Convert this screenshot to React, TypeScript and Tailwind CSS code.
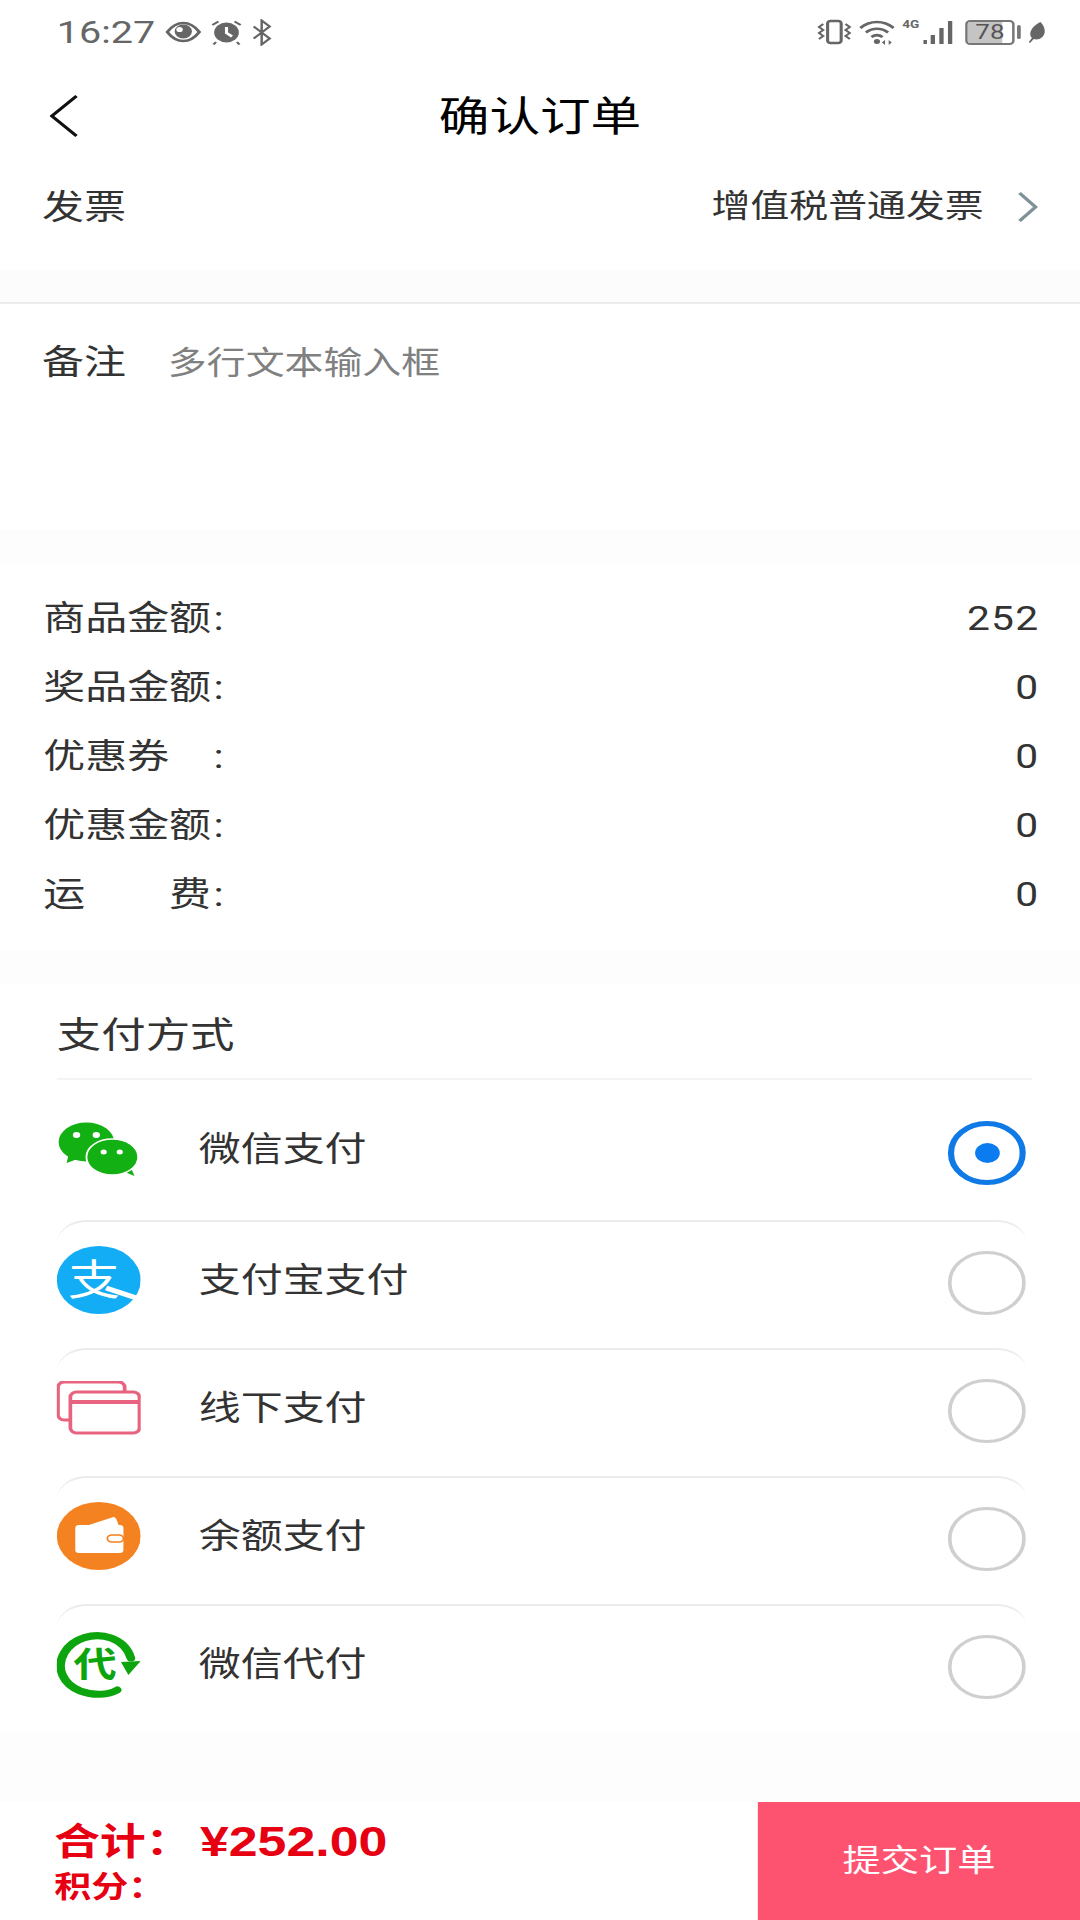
const priceRows = [
  { label: "商品金额", colon: ":", value: "252" },
  { label: "奖品金额", colon: ":", value: "0" },
  { label: "优惠券", colon: ":", value: "0" },
  { label: "优惠金额", colon: ":", value: "0" },
  { label: "运费", colon: ":", value: "0" },
];

function EyeIcon() {
  return (
    <svg width="29" height="24" viewBox="0 0 29 24" fill="none">
      <path d="M1.5 12C6 5 10 3 14.5 3S23 5 27.5 12C23 19 19 21 14.5 21S6 19 1.5 12Z" stroke="#666" strokeWidth="2.5" />
      <circle cx="14.5" cy="11.5" r="7" fill="#666" />
      <circle cx="11.5" cy="9.5" r="2.6" fill="#fff" />
    </svg>
  );
}

function AlarmIcon() {
  return (
    <svg width="25" height="26" viewBox="0 0 25 26" fill="none">
      <circle cx="12.5" cy="13.5" r="10" fill="#666" />
      <path d="M12.5 8v6l4.500 3.500" stroke="#fff" strokeWidth="2.500" />
      <path d="M1 6l5-3.500M24 6l-5-3.500M4 23l-2 2.500M21 23l2 2.500" stroke="#666" strokeWidth="2" />
    </svg>
  );
}

function BluetoothIcon() {
  return (
    <svg width="17" height="27" viewBox="0 0 17 27" fill="none">
      <path d="M1.500 7.500l13 12-6.500 6V1.500l6.500 6-13 12" stroke="#666" strokeWidth="2" />
    </svg>
  );
}

function VibrateIcon() {
  return (
    <svg width="28" height="26" viewBox="0 0 28 26" fill="none">
      <rect x="8.500" y="2" width="11" height="22" rx="2.500" stroke="#666" strokeWidth="2.500" />
      <path d="M5 5L1.500 8 5 11 1.500 14 5 17 1.500 20M23 5l3.500 3L23 11l3.500 3L23 17l3.500 3" stroke="#666" strokeWidth="1.800" />
    </svg>
  );
}

function WifiIcon() {
  return (
    <svg width="29" height="26" viewBox="0 0 29 26" fill="none">
      <path d="M1 9C9 1 20 1 28 9M5.500 13.500C11 8.500 18 8.500 23.500 13.500M10 18c3-2.500 6-2.500 9 0" stroke="#666" strokeWidth="2.500" />
      <circle cx="14.500" cy="22.500" r="2.500" fill="#666" />
      <path d="M21 21l-2.500 2.500 2.500 2.500zM24 21l2.500 2.500-2.500 2.500z" fill="#666" />
    </svg>
  );
}

function SignalIcon() {
  return (
    <svg width="25" height="25" viewBox="0 0 25 25" fill="#666">
      <rect x="0" y="20" width="3" height="4" />
      <rect x="6" y="15" width="3.500" height="9" />
      <rect x="13" y="8" width="3.500" height="16" />
      <rect x="20" y="1" width="3.500" height="23" />
    </svg>
  );
}

function LeafIcon() {
  return (
    <svg width="15" height="23" viewBox="0 0 15 23" fill="#666">
      <path d="M11 1c4 5 4.500 11 1.500 15-2 2.500-5 3-7 2l-3 4-1-1 2.500-4C1 13 3 6 11 1Z" />
    </svg>
  );
}

function WechatIcon() {
  return (
    <svg width="66" height="54" viewBox="0 0 66 54">
      <path d="M9 30L7 41l13-6z" fill="#13b013" />
      <ellipse cx="23" cy="20" rx="22.500" ry="19.500" fill="#13b013" />
      <circle cx="15" cy="13" r="3" fill="#fff" />
      <circle cx="31" cy="13" r="3" fill="#fff" />
      <path d="M50 48l12 6-4-11z" fill="#13b013" />
      <ellipse cx="44" cy="35" rx="21" ry="18" fill="#13b013" stroke="#fff" strokeWidth="1.500" />
      <circle cx="37" cy="30" r="2.500" fill="#fff" />
      <circle cx="50" cy="30" r="2.500" fill="#fff" />
    </svg>
  );
}

function AlipayIcon() {
  return (
    <svg width="68" height="68" viewBox="0 0 68 68">
      <circle cx="34" cy="34" r="34" fill="#12adf4" />
      <text x="30" y="49" textAnchor="middle" fontSize="42" fill="#fff" fontFamily="'Noto Sans CJK SC', sans-serif">支</text>
      <path d="M40 42l27 11" stroke="#fff" strokeWidth="5" />
    </svg>
  );
}

function CardsIcon() {
  return (
    <svg width="68" height="54" viewBox="0 0 68 54" fill="none" stroke="#e8637f" strokeWidth="3">
      <path d="M10 39H6a5 5 0 0 1-5-5V6a5 5 0 0 1 5-5h44a5 5 0 0 1 5 5v4" />
      <rect x="11" y="11" width="56" height="41" rx="5" />
      <path d="M11 21h56" strokeWidth="4" />
    </svg>
  );
}

function WalletIcon() {
  return (
    <svg width="68" height="68" viewBox="0 0 68 68">
      <circle cx="34" cy="34" r="34" fill="#f58220" />
      <path d="M26 23l20-8c2 0 3 4 4 8z" fill="#fff" />
      <rect x="15" y="23" width="39" height="28" rx="3" fill="#fff" />
      <rect x="41" y="33" width="13" height="7" rx="3.500" fill="#fff" stroke="#f58220" strokeWidth="1.500" />
    </svg>
  );
}

function ProxyPayIcon() {
  return (
    <svg width="68" height="68" viewBox="0 0 68 68" fill="none">
      <path d="M49 60C42 65 30 66 19 61 5 54-1 38 6 23 13 8 30 2 44 8c9 4 14 12 16 20" stroke="#0da50d" strokeWidth="7" strokeLinecap="round" />
      <path d="M52 32l16-1-10 14z" fill="#0da50d" />
      <text x="31" y="47" textAnchor="middle" fontSize="35" fontWeight="700" fill="#0da50d" fontFamily="'Noto Sans CJK SC', sans-serif">代</text>
    </svg>
  );
}

const payments = [
  { name: "微信支付", icon: <WechatIcon />, checked: true, rowClass: "h-[140px] pb-[2px]" },
  { name: "支付宝支付", icon: <AlipayIcon />, checked: false, rowClass: "h-[128px] pb-[10px] rounded-t-[24px] border-t-2 border-[#ececec]" },
  { name: "线下支付", icon: <CardsIcon />, checked: false, rowClass: "h-[128px] pb-[10px] rounded-t-[24px] border-t-2 border-[#ececec]" },
  { name: "余额支付", icon: <WalletIcon />, checked: false, rowClass: "h-[128px] pb-[10px] rounded-t-[24px] border-t-2 border-[#ececec]" },
  { name: "微信代付", icon: <ProxyPayIcon />, checked: false, rowClass: "h-[128px] pb-[10px] rounded-t-[24px] border-t-2 border-[#ececec]" },
];

function Radio({ checked }: { checked: boolean }) {
  if (checked) {
    return (
      <div className="mt-[8px] flex h-[64px] w-[63px] items-center justify-center rounded-full border-[5px] border-[#0f7ae5] bg-white">
        <div className="h-[20px] w-[20px] rounded-full bg-[#0a7cf0]" />
      </div>
    );
  }
  return <div className="mt-[6px] h-[64px] w-[63px] rounded-full border-[3px] border-[#cfcfcf] bg-white" />;
}

export default function App() {
  return (
    <div className="h-[1920px] w-[875px] origin-top-left scale-x-[1.2343] overflow-hidden bg-white font-['Roboto','Noto_Sans_CJK_SC',sans-serif] text-[#333]">
      {/* Status bar */}
      <div className="flex h-[70px] items-center justify-between pb-[6px] pl-[46px] pr-[28px]">
        <div className="flex items-center">
          <span className="text-[32px] leading-none text-[#666]">16:27</span>
          <div className="ml-[8px]"><EyeIcon /></div>
          <div className="ml-[8px]"><AlarmIcon /></div>
          <div className="ml-[8px]"><BluetoothIcon /></div>
        </div>
        <div className="flex items-center">
          <VibrateIcon />
          <div className="ml-[6px]"><WifiIcon /></div>
          <div className="relative ml-[6px] h-[26px] w-[42px]">
            <span className="absolute left-0 top-[-2px] text-[11px] font-bold text-[#666]">4G</span>
            <div className="absolute bottom-0 right-0"><SignalIcon /></div>
          </div>
          <div className="relative ml-[9px] flex h-[25px] w-[40px] items-center justify-center overflow-hidden rounded-[4px] border-2 border-[#777]">
            <div className="absolute inset-y-0 left-0 w-[78%] bg-[#c4c4c4]" />
            <span className="relative text-[21px] leading-none text-[#555]">78</span>
          </div>
          <div className="ml-[2px] h-[14px] w-[3px] rounded-sm bg-[#777]" />
          <div className="ml-[5px]"><LeafIcon /></div>
        </div>
      </div>

      {/* Title */}
      <div className="relative flex h-[90px] items-center justify-center pt-[4px]">
        <svg className="absolute left-[40px] top-[24px]" width="24" height="44" viewBox="0 0 24 44" fill="none">
          <path d="M22 2L2 22l20 20" stroke="#111" strokeWidth="2.800" />
        </svg>
        <span className="text-[41px] leading-none text-black">确认订单</span>
      </div>

      {/* Invoice */}
      <div className="flex h-[90px] items-center justify-between pl-[34px] pr-[34px] pt-[4px]">
        <span className="text-[34px]">发票</span>
        <div className="flex items-center">
          <span className="text-[31.5px]">增值税普通发票</span>
          <svg className="ml-[27px]" width="17" height="32" viewBox="0 0 17 32" fill="none">
            <path d="M2 2l13 14L2 30" stroke="#7f9198" strokeWidth="3" />
          </svg>
        </div>
      </div>
      <div className="h-[20px]" />
      <div className="h-[34px] border-b-2 border-[#ececec] bg-[#fcfcfc]" />

      {/* Remark */}
      <div className="flex h-[226px] items-start pl-[34px] pt-[34px]">
        <span className="text-[34px] leading-[48px]">备注</span>
        <span className="ml-[34px] mt-[2px] text-[31.5px] leading-[48px] text-[#808080]">多行文本输入框</span>
      </div>
      <div className="h-[35px] bg-[#fdfdfd]" />

      {/* Amounts */}
      <div className="flex h-[385px] flex-col pl-[35px] pr-[33px] pt-[19px]">
        {priceRows.map((row) => (
          <div key={row.label} className="flex h-[69px] items-center justify-between">
            <div className="flex items-center text-[34px]">
              {row.label === "运费" ? (
                <div className="flex w-[136px] justify-between"><span>运</span><span>费</span></div>
              ) : (
                <span className={row.label === "优惠券" ? "w-[136px]" : ""}>{row.label}</span>
              )}
              <span className="ml-[2px]">{row.colon}</span>
            </div>
            <span className="text-[33px] tracking-[1px]">{row.value}</span>
          </div>
        ))}
      </div>
      <div className="h-[35px] bg-[#fdfdfd]" />

      {/* Payment */}
      <div className="ml-[46px] mr-[39px] flex h-[95px] items-center border-b-2 border-[#f4f4f4] pt-[8px]">
        <span className="text-[36px]">支付方式</span>
      </div>
      <div className="ml-[46px] mr-[43px]">
        {payments.map((item) => (
          <div key={item.name} className={`flex items-center pr-[1px] ${item.rowClass}`}>
            <div className="flex w-[68px] justify-center">{item.icon}</div>
            <span className="ml-[47px] flex-1 text-[34px]">{item.name}</span>
            <Radio checked={item.checked} />
          </div>
        ))}
      </div>
      <div className="h-[70px] bg-[#fdfdfd]" />

      {/* Footer */}
      <div className="flex h-[118px] justify-between bg-white">
        <div className="flex flex-col pl-[44px] pt-[14px] font-bold text-[#e60012]">
          <div className="flex h-[52px] items-center text-[37px] leading-none">
            <span>合计：</span>
            <span className="ml-[7px] font-['Liberation_Sans','Noto_Sans_CJK_SC',sans-serif] text-[42px]">¥252.00</span>
          </div>
          <span className="mt-[2px] text-[30px] leading-[34px]">积分：</span>
        </div>
        <div className="flex w-[261px] items-center justify-center bg-[#fd5370] text-[31px] text-white">提交订单</div>
      </div>
    </div>
  );
}
